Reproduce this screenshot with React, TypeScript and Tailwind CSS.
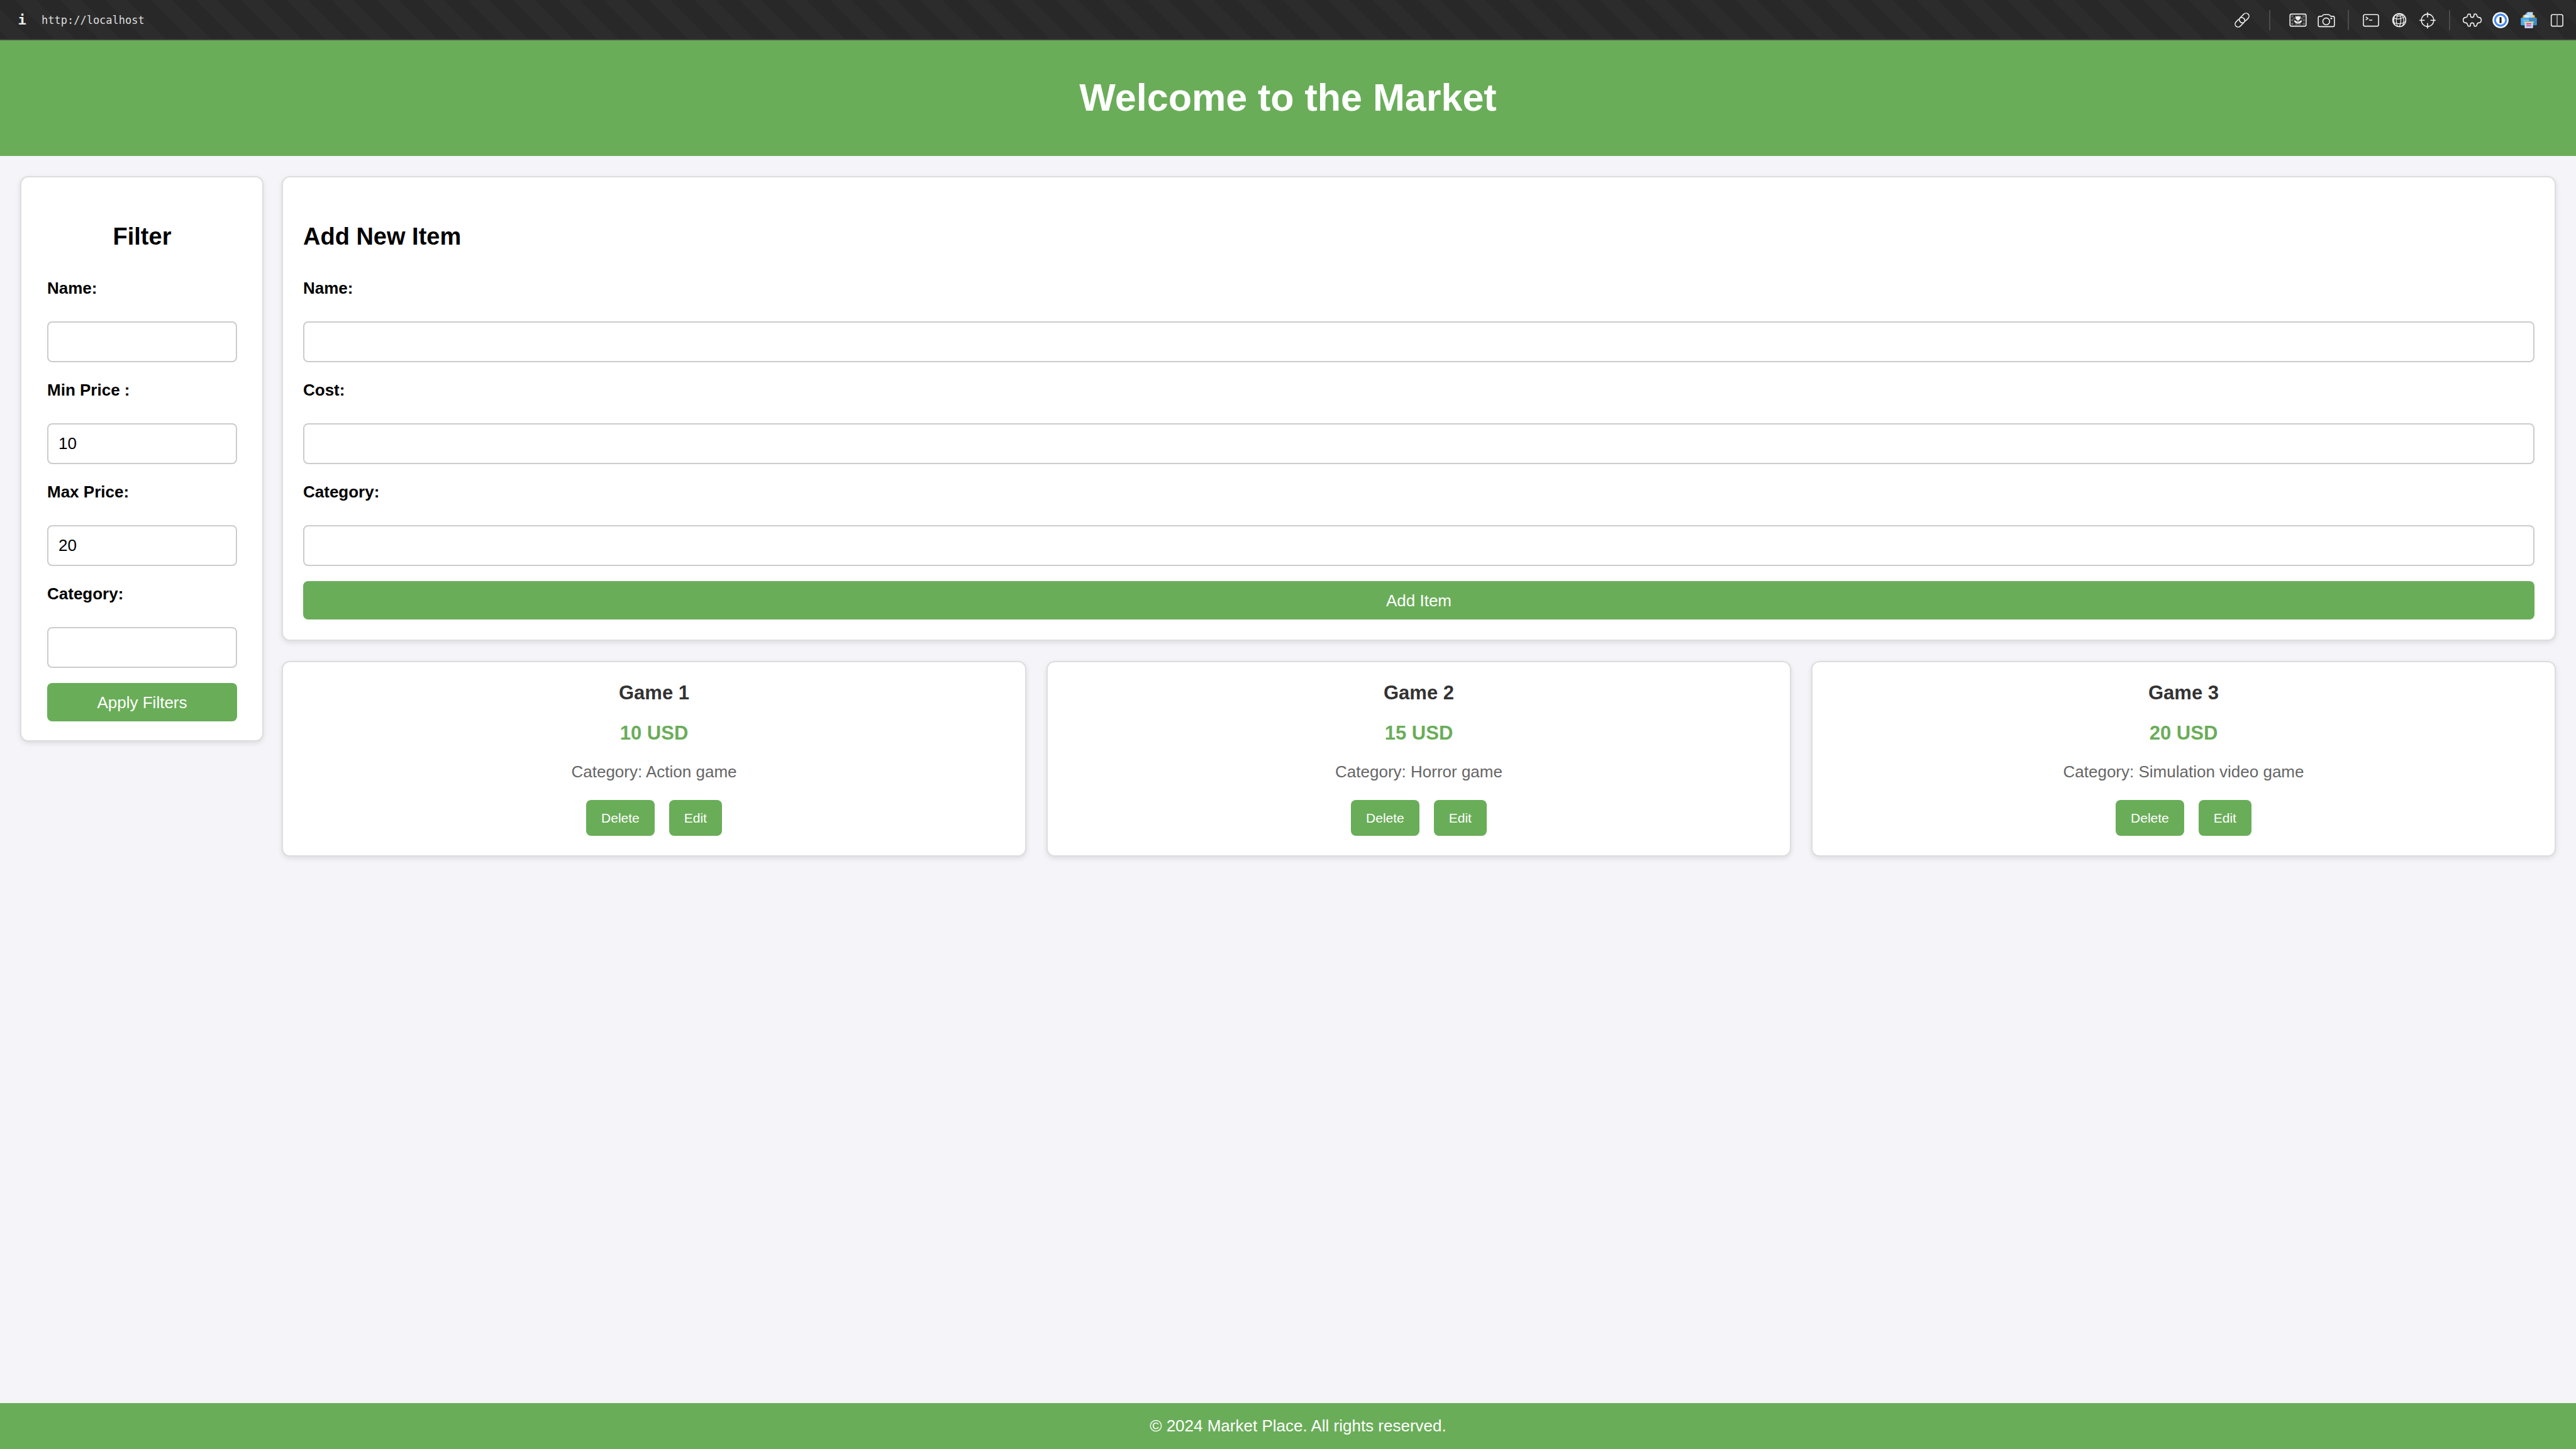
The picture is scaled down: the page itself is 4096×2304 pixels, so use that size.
import React, { ReactNode, useId, useState } from "react";

function Icon({ children }: { children: ReactNode }) {
  return (
    <svg
      viewBox="0 0 40 40"
      className="size-8"
      fill="none"
      stroke="#efefef"
      strokeWidth={2}
      strokeLinecap="round"
      strokeLinejoin="round"
      aria-hidden="true"
    >
      {children}
    </svg>
  );
}

function ToolButton({ label, children }: { label: string; children: ReactNode }) {
  return (
    <button type="button" aria-label={label} className="flex h-16 w-[45px] items-center justify-center">
      <Icon>{children}</Icon>
    </button>
  );
}

function Separator({ wide = false }: { wide?: boolean }) {
  return (
    <div className={wide ? "flex w-11 justify-center" : "flex w-[26px] justify-center"}>
      <div className="h-8 w-[2px] bg-[#4b4b4b]" />
    </div>
  );
}

function Toolbar() {
  return (
    <div className="flex h-16 items-center bg-[linear-gradient(45deg,#282828_16%,#2c2c2c_16%,#2c2c2c_40%,#282828_40%,#282828_66%,#2c2c2c_66%,#2c2c2c_90%,#282828_90%)] bg-size-[72px_72px] pr-2 shadow-[inset_0_-2px_0_#414141]">
      <button
        type="button"
        aria-label="Page information"
        className="ml-7 w-[14px] font-['DejaVu_Sans_Mono',monospace] text-[22px] leading-7 font-bold text-[#efefef]"
      >
        i
      </button>
      <input
        aria-label="Address"
        readOnly
        defaultValue="http://localhost"
        className="ml-6 h-8 flex-1 bg-transparent font-['DejaVu_Sans_Mono',monospace] text-[17px] text-[#dedede] outline-none"
      />
      <ToolButton label="Copy link">
        <g transform="rotate(-45 20 20)">
          <path d="M24 26 H31 A6 6 0 0 0 31 14 H21 A6 6 0 0 0 18.4 25.4" />
          <path d="M16 14 H9 A6 6 0 0 0 9 26 H19 A6 6 0 0 0 21.600 14.600" />
        </g>
      </ToolButton>
      <Separator wide />
      <ToolButton label="Save image">
        <g fill="#686868" stroke="none">
          <rect x="6.3" y="10.5" width="4.2" height="4.2" />
          <rect x="10.5" y="14.7" width="4" height="3.6" />
          <rect x="6.3" y="18" width="4.2" height="4.2" />
          <rect x="6.3" y="25.2" width="4.2" height="4.2" />
          <rect x="14.6" y="26.6" width="4" height="3" />
          <rect x="29.5" y="10.5" width="4.2" height="4.2" />
          <rect x="25.5" y="14.7" width="4" height="3.6" />
          <rect x="29.5" y="18" width="4.2" height="4.2" />
          <rect x="29.5" y="25.2" width="4.2" height="4.2" />
          <rect x="21.6" y="26.6" width="4" height="3" />
        </g>
        <rect x="4" y="8" width="32" height="24" rx="3" />
        <g fill="#efefef" stroke="none">
          <path d="M15 11.5l2.6 1.6L20 11.2l2.4 1.9 2.6-1.6c.4 4.5-.6 8-4.2 8.4V28h-1.6v-8.100c-3.600-.400-4.600-3.900-4.200-8.400z" />
          <path d="M12 20.300c4.500.300 7 2.700 7.700 6.400-4.400.200-7.200-1.900-7.700-6.400z" />
          <path d="M28 20.300c-4.500.300-7 2.700-7.700 6.400 4.400.200 7.200-1.900 7.700-6.400z" />
        </g>
      </ToolButton>
      <ToolButton label="Take screenshot">
        <path d="M7 12.400h3.200c1.200 0 1.800-.5 2.500-1.600.8-1.300 1.500-1.800 3-1.800h8.600c1.500 0 2.200.5 3 1.800.7 1.100 1.300 1.600 2.500 1.600H33c2 0 3 1 3 3V30c0 2-1 3-3 3H7c-2 0-3-1-3-3V15.400c0-2 1-3 3-3z" />
        <circle cx="19.800" cy="22.600" r="6.800" />
        <circle cx="30" cy="16.700" r="1.800" fill="#efefef" stroke="none" />
      </ToolButton>
      <Separator />
      <ToolButton label="Developer console">
        <rect x="5" y="9" width="30" height="23" rx="3" />
        <path d="M10 14l4.200 2.600-4.200 2.600M16.800 20h5.200" strokeWidth="1.800" />
      </ToolButton>
      <ToolButton label="Network">
        <circle cx="20" cy="20" r="13" />
        <g strokeWidth="1.500">
          <path d="M20.500 7c-7 5-8.500 16-3.500 26M20.500 7c3.500 7 4 18-.5 26M21.500 7c7.500 5 9 14 5.500 24M18.500 7c-6 1.500-9.500 6-10.500 13" />
          <path d="M8.500 15c6 4 16 3.500 22.500-2M7.500 24c7 4 18 4.500 25.500-2M10 16c-1.500 4-1 8 1 12M13 11c6 2 10 1.500 14-1" />
        </g>
      </ToolButton>
      <ToolButton label="Inspect element">
        <circle cx="20" cy="20.300" r="12.300" />
        <path d="M20 5v9M20 26.500v9.500M4.500 20.300h9M26.500 20.300H35.500" />
      </ToolButton>
      <Separator />
      <ToolButton label="Extensions">
        <path d="M12.600 8h2.600c1.200 0 1.300.8 1.300 1.800v1.200a3.500 3.500 0 0 0 7 0V9.800c0-1 .1-1.800 1.300-1.800h2.600c1.300 0 1.500 1 1.800 2.500.5 2.500 1.200 4 3.200 4 3.600 0 5.600 2.200 5.600 5.500s-2 5.500-5.600 5.500c-2 0-2.700 1.500-3.200 4-.3 1.500-.5 2.500-1.800 2.500h-2.600c-1.200 0-1.300-.8-1.300-1.800V29a3.500 3.500 0 0 0-7 0v1.200c0 1-.1 1.800-1.300 1.800h-2.600c-1.300 0-1.500-1-1.800-2.500-.5-2.500-1.200-4-3.200-4C4 25.500 2 23.300 2 20s2-5.500 5.600-5.500c2 0 2.700-1.500 3.200-4 .3-1.500.5-2.500 1.800-2.500z" />
      </ToolButton>
      <ToolButton label="Password manager">
        <g stroke="none">
          <circle cx="20" cy="20" r="16" fill="#ffffff" />
          <circle cx="20" cy="20" r="13" fill="#448bfb" />
          <circle cx="20" cy="20" r="9" fill="#ffffff" />
          <rect x="18" y="14" width="4" height="12" rx="0.500" fill="#222222" />
        </g>
      </ToolButton>
      <ToolButton label="Print">
        <g stroke="none">
          <rect x="8" y="9.700" width="24" height="10" rx="3" fill="#fdb62f" />
          <path d="M17.500 4H28v12H11.700V10z" fill="#bddcf6" />
          <path d="M17.500 4v6h-5.800z" fill="#8fc3ec" />
          <path d="M11.700 10h5.800L22 16H11.700z" fill="#deeefb" />
          <path d="M6 15h14v15.300H6a2 2 0 0 1-2-2V17a2 2 0 0 1 2-2z" fill="#4ba9ea" />
          <path d="M20 15h14a2 2 0 0 1 2 2v11.300a2 2 0 0 1-2 2H20z" fill="#3f8dc6" />
          <path d="M9.500 19.300h2v2h-2zM13.500 19.300h2v2h-2zM17.500 19.300h2v2h-2z" fill="#cdeafc" />
          <rect x="9.700" y="22.800" width="20.500" height="2.300" rx="1" fill="#e3d85a" />
          <rect x="11.700" y="25" width="16.600" height="11" fill="#c4dff6" />
          <path d="M15 26.400h10v2H15zM15 30.300h10v2H15z" fill="#cf3694" />
        </g>
      </ToolButton>
      <ToolButton label="Split view">
        <rect x="8.300" y="9" width="23" height="23" rx="3" />
        <path d="M20 9v23" stroke="#b4b4b4" />
      </ToolButton>
    </div>
  );
}

function Field({ label, type = "text", initial = "" }: { label: string; type?: string; initial?: string }) {
  const id = useId();
  const [value, setValue] = useState(initial);
  return (
    <div className="flex flex-col gap-[38px]">
      <label htmlFor={id} className="text-[26px] leading-[30px] font-bold text-black">
        {label}
      </label>
      <input
        id={id}
        type={type}
        value={value}
        onChange={(e) => setValue(e.target.value)}
        className="h-[65px] w-full rounded-lg border-2 border-[#cccccc] bg-white px-4 text-[26px] leading-[30px] text-black [appearance:textfield]"
      />
    </div>
  );
}

function SubmitButton({ children }: { children: ReactNode }) {
  return (
    <button type="submit" className="mt-6 h-[61px] w-full rounded-lg bg-[#6aad59] text-[26px] leading-[30px] text-white">
      {children}
    </button>
  );
}

function SmallButton({ children }: { children: ReactNode }) {
  return (
    <button type="button" className="h-[57px] rounded-lg bg-[#6aad59] px-6 text-[21px] leading-6 text-white">
      {children}
    </button>
  );
}

const games = [
  { name: "Game 1", cost: 10, category: "Action game" },
  { name: "Game 2", cost: 15, category: "Horror game" },
  { name: "Game 3", cost: 20, category: "Simulation video game" },
];

function GameCard({ name, cost, category }: { name: string; cost: number; category: string }) {
  return (
    <article className="flex flex-col items-center rounded-[13px] border-2 border-[#dddddd] bg-white pt-[31px] pb-[31px] shadow-[0_3px_8px_rgba(0,0,0,0.1)]">
      <h3 className="text-[31px] leading-9 font-bold text-[#333333]">{name}</h3>
      <p className="mt-7 text-[31px] leading-9 font-bold text-[#6aad59]">{cost} USD</p>
      <p className="mt-7 text-[26px] leading-[30px] text-[#666666]">Category: {category}</p>
      <div className="mt-[30px] flex gap-[23px]">
        <SmallButton>Delete</SmallButton>
        <SmallButton>Edit</SmallButton>
      </div>
    </article>
  );
}

export default function App() {
  const stop = (e: React.FormEvent) => e.preventDefault();
  return (
    <div className="flex min-h-screen flex-col bg-[#f4f4f9] font-['Liberation_Sans',Arial,sans-serif]">
      <Toolbar />
      <header className="bg-[#6aad59] pt-14 pb-[58px]">
        <h1 className="text-center text-[61px] leading-[70px] font-bold text-white">Welcome to the Market</h1>
      </header>
      <div className="flex items-start gap-[29px] p-8">
        <aside className="w-[387px] shrink-0 rounded-[13px] border-2 border-[#dddddd] bg-white pt-[72px] pr-10 pb-[30px] pl-[41px] shadow-[0_3px_8px_rgba(0,0,0,0.1)]">
          <form onSubmit={stop}>
            <h2 className="mb-[45px] text-center text-[38px] leading-[44px] font-bold text-black">Filter</h2>
            <div className="flex flex-col gap-[29px]">
              <Field label="Name:" />
              <Field label="Min Price :" type="number" initial="10" />
              <Field label="Max Price:" type="number" initial="20" />
              <Field label="Category:" />
            </div>
            <SubmitButton>Apply Filters</SubmitButton>
          </form>
        </aside>
        <main className="flex flex-1 flex-col gap-8">
          <form
            onSubmit={stop}
            className="rounded-[13px] border-2 border-[#dddddd] bg-white px-8 pt-[72px] pb-8 shadow-[0_3px_8px_rgba(0,0,0,0.1)]"
          >
            <h2 className="mb-[45px] text-[38px] leading-[44px] font-bold text-black">Add New Item</h2>
            <div className="flex flex-col gap-[29px]">
              <Field label="Name:" />
              <Field label="Cost:" />
              <Field label="Category:" />
            </div>
            <SubmitButton>Add Item</SubmitButton>
          </form>
          <section aria-label="Items" className="grid grid-cols-3 gap-8">
            {games.map((g) => (
              <GameCard key={g.name} {...g} />
            ))}
          </section>
        </main>
      </div>
      <footer className="mt-auto bg-[#6aad59] pt-[21px] pb-[22px] pl-8 text-center text-[26px] leading-[30px] text-white">
        © 2024 Market Place. All rights reserved.
      </footer>
    </div>
  );
}
